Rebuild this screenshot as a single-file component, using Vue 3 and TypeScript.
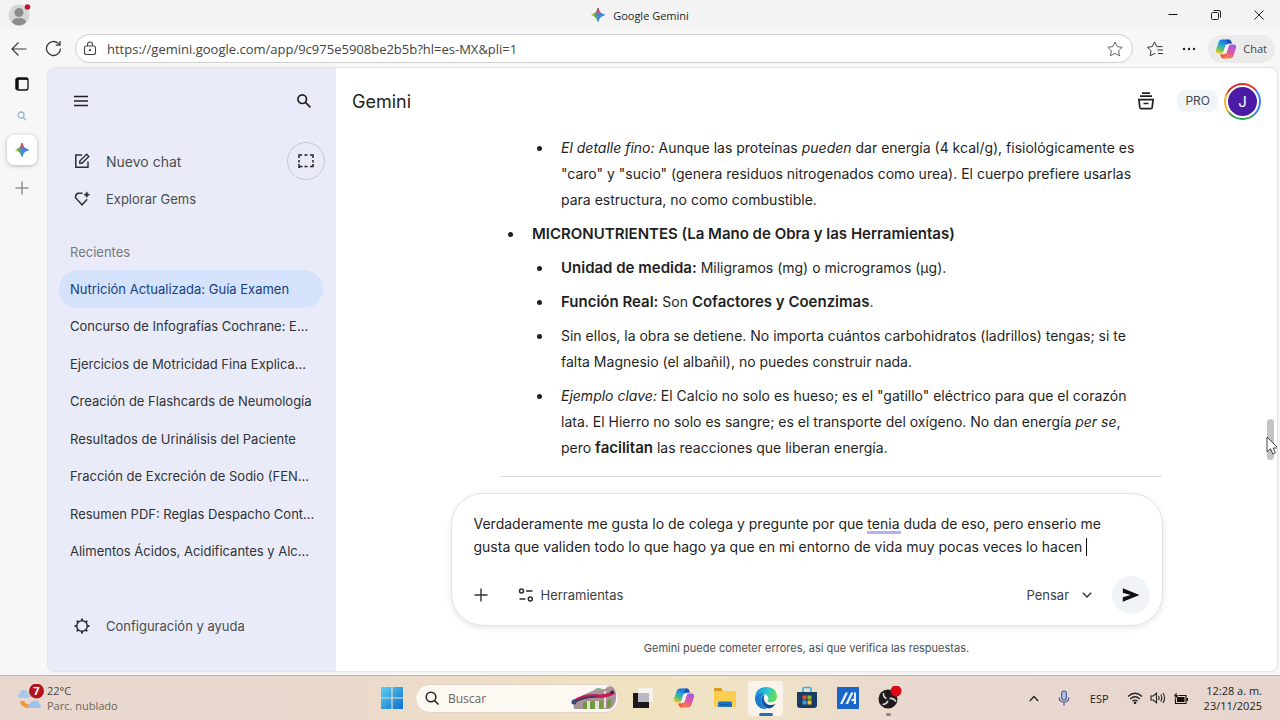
<script setup lang="ts">
import { ref } from 'vue'

interface Chat {
  title: string
  active?: boolean
}

const chats: Chat[] = [
  { title: 'Nutrición Actualizada: Guía Examen', active: true },
  { title: 'Concurso de Infografías Cochrane: E...' },
  { title: 'Ejercicios de Motricidad Fina Explica...' },
  { title: 'Creación de Flashcards de Neumología' },
  { title: 'Resultados de Urinálisis del Paciente' },
  { title: 'Fracción de Excreción de Sodio (FEN...' },
  { title: 'Resumen PDF: Reglas Despacho Cont...' },
  { title: 'Alimentos Ácidos, Acidificantes y Alc...' },
]

const url = ref('https://gemini.google.com/app/9c975e5908be2b5b?hl=es-MX&pli=1')
const mode = ref('Pensar')
const query = ref('')
const prompt = ref(
  'Verdaderamente me gusta lo de colega y pregunte por que tenia duda de eso, pero enserio me\n' +
    'gusta que validen todo lo que hago ya que en mi entorno de vida muy pocas veces lo hacen ',
)
</script>

<template>
  <div class="screen">
    <svg class="defs" width="0" height="0" aria-hidden="true">
      <defs>
        <linearGradient id="cpA" x1="0.6" y1="0" x2="0.2" y2="1">
          <stop offset="0" stop-color="#1b63d6" /><stop offset="0.4" stop-color="#22a5dc" />
          <stop offset="0.7" stop-color="#5cc06a" /><stop offset="1" stop-color="#f5cf2b" />
        </linearGradient>
        <linearGradient id="cpB" x1="0.7" y1="0" x2="0.3" y2="1">
          <stop offset="0" stop-color="#a05be8" /><stop offset="0.5" stop-color="#e0559f" />
          <stop offset="1" stop-color="#fb8a3c" />
        </linearGradient>
        <symbol id="copilot" viewBox="0 0 22 22">
          <path d="M7 1.500h6.500q2 0 2.600 2l.7 2H13q-2 0-2.600 2L8.600 13.500q-.6 2-2.600 2H3.500Q.3 15.500 1 12L3.500 4.500Q4.400 1.500 7 1.500z" fill="url(#cpA)" />
          <path d="M12.500 1.500h1q2 0 2.600 2l.7 2h-3.300q-1.800 0-2.500 1.500z" fill="#1d4fb5" />
          <path d="M15 20.500H8.500q-2 0-2.600-2l-.7-2H9q2 0 2.600-2l1.800-6q.6-2 2.600-2h2.500q3.200 0 2.500 3.500L18.500 17.500Q17.600 20.500 15 20.500z" fill="url(#cpB)" />
          <path d="M9.500 20.500h-1q-2 0-2.600-2l-.7-2h3.300q1.800 0 2.500-1.500z" fill="#f0623e" />
          <path d="M10.800 7h3.400L11.400 15H7.900z" fill="#f6f1ee" />
        </symbol>
        <linearGradient id="gmA" x1="0" y1="0.5" x2="1" y2="0.5">
          <stop offset="0" stop-color="#f6c61c" /><stop offset="0.32" stop-color="#3fae6a" />
          <stop offset="0.55" stop-color="#4a83e0" /><stop offset="1" stop-color="#2f86f6" />
        </linearGradient>
        <linearGradient id="gmB" x1="0.5" y1="0" x2="0.5" y2="1">
          <stop offset="0" stop-color="#ea3b35" /><stop offset="0.3" stop-color="#d8506a" stop-opacity="0.7" />
          <stop offset="0.45" stop-color="#4a83e0" stop-opacity="0" />
        </linearGradient>
        <symbol id="gemini" viewBox="0 0 16 16">
          <path d="M8 0.500Q9 7 15.500 8Q9 9 8 15.500Q7 9 .5 8Q7 7 8 .5z" fill="url(#gmA)" stroke="url(#gmA)" stroke-width="1.400" />
          <path d="M8 0.500Q9 7 15.500 8Q9 9 8 15.500Q7 9 .5 8Q7 7 8 .5z" fill="url(#gmB)" stroke="url(#gmB)" stroke-width="1.400" />
        </symbol>
      </defs>
    </svg>

    <header class="titlebar">
      <button class="profile" aria-label="Perfil">
        <svg width="24" height="24" viewBox="0 0 24 24">
          <circle cx="11" cy="12" r="10.500" fill="#d6d6d6" />
          <circle cx="11" cy="9.500" r="4.500" fill="#8c8c8c" />
          <path d="M4 19.500q0-4.500 7-4.500t7 4.500q-3 3-7 3t-7-3z" fill="#8c8c8c" />
          <circle cx="19.500" cy="4" r="2.800" fill="#c4122f" />
        </svg>
      </button>
      <div class="wintitle">
        <svg width="14" height="14"><use href="#gemini" /></svg>
        <span>Google Gemini</span>
      </div>
      <div class="winbtns">
        <button aria-label="Minimizar"><svg width="12" height="12" viewBox="0 0 12 12"><path d="M1.500 5.500h9" stroke="#111" /></svg></button>
        <button aria-label="Restaurar">
          <svg width="12" height="12" viewBox="0 0 12 12" fill="none" stroke="#222"><rect x="1.500" y="3.500" width="7" height="7" rx="1" /><path d="M3.500 1.500h5.500q1.500 0 1.500 1.500v5.500" /></svg>
        </button>
        <button aria-label="Cerrar"><svg width="12" height="12" viewBox="0 0 12 12"><path d="M1.500 1.500l9 9M10.500 1.500l-9 9" stroke="#222" /></svg></button>
      </div>
    </header>

    <nav class="toolbar" aria-label="Navegación">
      <button class="tool" aria-label="Atrás">
        <svg width="16" height="16" viewBox="0 0 16 16" fill="none" stroke="#3a3a3a" stroke-width="1.200"><path d="M15.500 8H1M7.500 1.500L1 8l6.500 6.500" /></svg>
      </button>
      <button class="tool" aria-label="Actualizar">
        <svg width="17" height="17" viewBox="0 0 17 17" fill="none" stroke="#3a3a3a" stroke-width="1.300"><path d="M15.500 8.500a7 7 0 1 1-2.200-5.100L15 5M15 1v4.200h-4.200" /></svg>
      </button>
      <div class="address">
        <svg width="14" height="15" viewBox="0 0 14 15" fill="none" stroke="#444" stroke-width="1.100"><rect x="1.500" y="5" width="11" height="8.500" rx="2" /><path d="M4.500 5V3.500a2.500 2.500 0 0 1 5 0V5" /><circle cx="7" cy="9.200" r=".6" fill="#444" /></svg>
        <input v-model="url" aria-label="Dirección" spellcheck="false" />
        <svg width="16" height="16" viewBox="0 0 16 16" fill="none" stroke="#666" stroke-linejoin="round"><path d="M8 1l2.200 4.600 5 .7-3.600 3.500.9 5L8 12.400l-4.500 2.400.9-5L.8 6.300l5-.7z" /></svg>
      </div>
      <button class="tool fav" aria-label="Favoritos">
        <svg width="17" height="16" viewBox="0 0 17 16" fill="none" stroke="#333" stroke-linejoin="round"><path d="M9.500 5.600H15.500M10.500 9h5.500M11 12.500h5M9.600 5.300L7.500 1 5.300 5.600l-4.800.7L4 9.800l-.8 5L7.500 12.500l1 .5" /></svg>
      </button>
      <button class="tool dots" aria-label="Más">
        <svg width="14" height="4" viewBox="0 0 14 4" fill="#222"><circle cx="2" cy="2" r="1.200" /><circle cx="7" cy="2" r="1.200" /><circle cx="12" cy="2" r="1.200" /></svg>
      </button>
      <button class="copilot">
        <svg width="22" height="22"><use href="#copilot" /></svg>
        <span>Chat</span>
      </button>
    </nav>

    <div class="body">
      <aside class="rail">
        <button aria-label="Pestañas verticales">
          <svg width="14" height="14" viewBox="0 0 14 14" fill="none"><rect x="1" y="1" width="12" height="12" rx="2" stroke="#111" stroke-width="1.300" /><path d="M2.200 1.500v11" stroke="#111" stroke-width="3" /><path d="M1 2h12" stroke="#111" stroke-width="1.800" /></svg>
        </button>
        <button aria-label="Buscar">
          <svg width="10" height="10" viewBox="0 0 10 10" fill="none" stroke="#8fb9c9" stroke-width="1.300"><circle cx="4" cy="4" r="3" /><path d="M6.200 6.200l3 3" /></svg>
        </button>
        <button class="tab" aria-label="Google Gemini"><svg width="14" height="14"><use href="#gemini" /></svg></button>
        <button aria-label="Nueva pestaña">
          <svg width="14" height="14" viewBox="0 0 14 14"><path d="M.5 7h13M7 .5v13" stroke="#666" /></svg>
        </button>
      </aside>

      <div class="page">
        <aside class="sidebar">
          <div class="sidehead">
            <button aria-label="Menú"><svg width="16" height="12" viewBox="0 0 16 12"><path d="M1 1.500h14M1 6h14M1 10.500h14" stroke="#1f1f1f" stroke-width="1.500" /></svg></button>
            <button aria-label="Buscar chats"><svg width="16" height="16" viewBox="0 0 16 16" fill="none" stroke="#1f1f1f" stroke-width="1.700"><circle cx="6.200" cy="6.200" r="4.300" /><path d="M9.400 9.400l5 5" /></svg></button>
          </div>
          <div class="newrow">
            <button class="action new">
              <svg width="16" height="16" viewBox="0 0 16 16" fill="none" stroke="#303236" stroke-width="1.500"><path d="M8 2H1.800v12.200H14V8.500" /><path d="M5.800 10.200V8L12.600 1.300 14.800 3.400 8 10.200z" stroke-width="1.400" /></svg>
              <span>Nuevo chat</span>
            </button>
            <button class="snap" aria-label="Chat temporal">
              <svg width="16" height="14" viewBox="0 0 16 14" fill="none" stroke="#222" stroke-width="1.500"><path d="M1 4V1h3M6.500 1h3M12 1h3v3M15 6v2.500M15 10v2.500h-3M9.500 12.500h-3M4.500 12.500H2.500L1 13.500V10M1 8.500V6" /></svg>
            </button>
          </div>
          <button class="action">
            <svg width="16" height="16" viewBox="0 0 16 16" fill="none" stroke="#303236" stroke-width="1.500"><path d="M8.500 2.300H4Q1.200 3.500 1.500 6.800L8 13.800l5.200-5.600" /><path d="M12.800.8q.3 2.500 2.800 2.900-2.500.4-2.800 2.900-.4-2.500-2.900-2.900Q12.400 3.300 12.800.8z" fill="#303236" stroke-width=".6" /></svg>
            <span>Explorar Gems</span>
          </button>
          <h2>Recientes</h2>
          <ul class="chats">
            <li v-for="c in chats" :key="c.title"><a href="#" :class="{ active: c.active }">{{ c.title }}</a></li>
          </ul>
          <button class="action settings">
            <svg width="16" height="16" viewBox="0 0 16 16" fill="none" stroke="#2b2d31" stroke-width="1.500"><circle cx="8" cy="8" r="5.300" /><path d="M8 .6v2M8 13.400v2M.6 8h2M13.400 8h2M2.800 2.800l1.300 1.300M11.900 11.900l1.300 1.300M13.200 2.800l-1.300 1.300M4.100 11.900l-1.300 1.300" stroke-width="2" /></svg>
            <span>Configuración y ayuda</span>
          </button>
        </aside>

        <main class="main">
          <header class="mainhead">
            <h1>Gemini</h1>
            <button class="box" aria-label="Archivo">
              <svg width="18" height="18" viewBox="0 0 18 18" fill="none" stroke="#1f1f1f" stroke-width="1.700"><path d="M5 1.200h8M3 4.200h12M1 7.600h16" /><path d="M2 8l.8 7.400q.2 1.300 1.500 1.300h9.400q1.300 0 1.500-1.300L16 8M6.500 11.500h5" /></svg>
            </button>
            <span class="pro">PRO</span>
            <button class="avatar" aria-label="Cuenta"><span>J</span></button>
          </header>

          <section class="chat">
            <ul class="outer">
              <li class="cont">
                <ul>
                  <li><em>El detalle fino:</em> Aunque las proteínas <em>pueden</em> dar energía (4 kcal/g), fisiológicamente es<br />"caro" y "sucio" (genera residuos nitrogenados como urea). El cuerpo prefiere usarlas<br />para estructura, no como combustible.</li>
                </ul>
              </li>
              <li>
                <b>MICRONUTRIENTES (La Mano de Obra y las Herramientas)</b>
                <ul>
                  <li><b>Unidad de medida:</b> Miligramos (mg) o microgramos (µg).</li>
                  <li><b>Función Real:</b> Son <b>Cofactores y Coenzimas</b>.</li>
                  <li>Sin ellos, la obra se detiene. No importa cuántos carbohidratos (ladrillos) tengas; si te<br />falta Magnesio (el albañil), no puedes construir nada.</li>
                  <li><em>Ejemplo clave:</em> El Calcio no solo es hueso; es el "gatillo" eléctrico para que el corazón<br />lata. El Hierro no solo es sangre; es el transporte del oxígeno. No dan energía <em>per se</em>,<br />pero <b>facilitan</b> las reacciones que liberan energía.</li>
                </ul>
              </li>
            </ul>
            <hr />
          </section>

          <form class="composer" @submit.prevent>
            <div class="field">
              <textarea v-model="prompt" rows="2" aria-label="Escribe una instrucción" spellcheck="false"></textarea>
              <i class="spell"></i>
              <i class="caret"></i>
            </div>
            <div class="controls">
              <button type="button" class="plus" aria-label="Agregar"><svg width="14" height="14" viewBox="0 0 14 14"><path d="M.5 7h13M7 .5v13" stroke="#333" stroke-width="1.400" /></svg></button>
              <button type="button" class="tools">
                <svg width="16" height="14" viewBox="0 0 16 14" fill="none" stroke="#2b2b2b" stroke-width="1.500"><circle cx="3.500" cy="3" r="2" /><path d="M8 3h6.500M1.500 11h6" /><circle cx="12.300" cy="11" r="2" /></svg>
                <span>Herramientas</span>
              </button>
              <div class="mode">
                <select v-model="mode" aria-label="Modelo"><option>Pensar</option></select>
                <svg width="10" height="6" viewBox="0 0 10 6"><path d="M.8.8L5 5 9.200.8" fill="none" stroke="#333" stroke-width="1.400" /></svg>
              </div>
              <button class="send" aria-label="Enviar"><svg width="18" height="14" viewBox="0 0 18 14"><path d="M.8.3L17.500 7 .8 13.700V9.300L8.500 7 .8 4.700z" fill="#111" /></svg></button>
            </div>
          </form>
          <p class="note">Gemini puede cometer errores, así que verifica las respuestas.</p>
          <i class="thumb"></i>
          <svg class="cursor" width="13" height="20" viewBox="0 0 13 20"><path d="M1 1v15l3.500-3.300L6.800 18l2.600-1.100L7.200 12H12z" fill="#fff" stroke="#444" /></svg>
        </main>
      </div>
    </div>

    <footer class="taskbar">
      <button class="weather">
        <svg width="29" height="28" viewBox="0 0 29 28">
          <path d="M1 14q-2-3 1-5 1-4 4.500-3 3 .5 3.500 4 3 1 1.500 4z" fill="#a9c8ef" />
          <path d="M2 17q1 7 8 7 4 0 6-3 -9 0-10-4z" fill="#f0993a" />
          <path d="M11 24q-2-3 1-4.500 2-3.500 6-2.500 3 0 3.500 3 2.500 2 .5 4z" fill="#9cc3f2" />
          <circle cx="18.500" cy="7" r="7.500" fill="#b3131f" />
          <text x="18.500" y="11" text-anchor="middle" class="badge">7</text>
        </svg>
        <span class="wtext"><span>22°C</span><span class="wsub">Parc. nublado</span></span>
      </button>
      <div class="dock">
        <button aria-label="Inicio">
          <svg width="22" height="22" viewBox="0 0 22 22"><defs><linearGradient id="win" x2="1" y2="1"><stop stop-color="#5fd0f5" /><stop offset="1" stop-color="#0a6fc9" /></linearGradient></defs><path d="M0 0h10.400v10.400H0zM11.600 0H22v10.400H11.600zM0 11.600h10.400V22H0zM11.600 11.600H22V22H11.600z" fill="url(#win)" /></svg>
        </button>
        <label class="search">
          <svg width="14" height="14" viewBox="0 0 14 14" fill="none" stroke="#222" stroke-width="1.500"><circle cx="6" cy="6" r="4.800" /><path d="M9.500 9.500l4 4" /></svg>
          <input v-model="query" placeholder="Buscar" aria-label="Buscar" />
          <svg class="art" width="46" height="26" viewBox="0 0 46 26">
            <path d="M20 9q6-10 12-4l-2 8z" fill="#8cb890" />
            <path d="M3 24q-2-8 3-10Q20 4 34 4q3-4 8-2 4 5 3 12-1 7-6 10z" fill="#a9929a" />
            <path d="M12 24v-6q4-3 4 0v6zM19 24v-7q4-3 5 0v7zM28 24v-7q4-3 4 0v7zM36 23v-7q4-3 4 0v5z" fill="#6f9b3e" />
            <path d="M16 24v-8h3v8zM24 24v-8h4v8zM33 23V6h2v17z" fill="#e9ded3" />
            <path d="M2 17Q14 10 25 11t18-4" fill="none" stroke="#bf1f55" stroke-width="3.500" />
            <path d="M1 18Q14 11 25 12" fill="none" stroke="#3c3a66" stroke-width="1.500" />
            <circle cx="3" cy="17" r="2.500" fill="#3b4a77" /><circle cx="41" cy="7" r="1.500" fill="#222" />
          </svg>
        </label>
        <button aria-label="Vista de tareas"><svg width="22" height="22" viewBox="0 0 22 22"><path d="M1 6h16v15H1z" fill="#1b1b1b" /><path d="M6 1h15v14H6z" fill="#f7f5f5" fill-opacity=".85" /><path d="M6 6h11v9H6z" fill="#bdb9c2" /></svg></button>
        <button aria-label="Copilot"><svg width="22" height="22"><use href="#copilot" /></svg></button>
        <button aria-label="Explorador"><svg width="24" height="22" viewBox="0 0 24 22"><path d="M1 2q0-1 1-1h6l2 3H1z" fill="#d99a1e" /><path d="M1 4h21q1 0 1 1v14q0 1-1 1H2q-1 0-1-1z" fill="#fbcd4e" /><path d="M5 20v-4q0-1.500 1.500-1.500h11q1.500 0 1.500 1.500v4z" fill="#1b74bf" /><path d="M7 17.500h10" stroke="#1257a0" /></svg></button>
        <button class="current" aria-label="Edge">
          <svg width="24" height="24" viewBox="0 0 24 24"><defs><linearGradient id="eA" x2="1" y2=".3"><stop stop-color="#1684d3" /><stop offset=".55" stop-color="#2cc4d8" /><stop offset="1" stop-color="#62dc55" /></linearGradient><linearGradient id="eB" x2=".6" y2="1"><stop stop-color="#1b6fc6" /><stop offset="1" stop-color="#0c4a94" /></linearGradient></defs>
            <path d="M1 11Q2 1 12.500 1 22.500 1.500 23 10q0 6-6 6.300-4 .2-3.300-1.800Q15.500 12 13 9.500 8 5.500 1 11z" fill="url(#eA)" />
            <path d="M1 11q4-5 9.500-3.500Q7 9.500 7 14q.5 6.500 6 8.800Q3 24 1 14z" fill="#1a7fd0" />
            <path d="M10.500 8Q7 10 7 14q1 8 8.500 8.500 4-1 6-4.500-4.500 2-8 .2Q8.500 15 10.500 8z" fill="url(#eB)" />
          </svg>
        </button>
        <button aria-label="Microsoft Store"><svg width="22" height="24" viewBox="0 0 22 24"><path d="M7 6V3q0-1.500 1.500-1.500h5Q15 1.500 15 3v3" fill="none" stroke="#35b1e0" stroke-width="1.700" /><path d="M1 6h20v13q0 3-3 3H4q-3 0-3-3z" fill="#183c63" /><path d="M6.500 9.500h4v4h-4z" fill="#e9512d" /><path d="M11.500 9.500h4v4h-4z" fill="#7fba2a" /><path d="M6.500 14.500h4v4h-4z" fill="#2ca3e8" /><path d="M11.500 14.500h4v4h-4z" fill="#fdbb1e" /></svg></button>
        <button aria-label="Aplicación"><svg width="22" height="22" viewBox="0 0 22 22"><path d="M0 0h22v22H0z" fill="#1b66c9" /><path d="M3 17L8.500 5.500h2.500L5.500 17zM8.500 17L14 5.500h2.500L11 17zM17 5.500h2V17h-2.200v-3H14l1-2.200h1.800z" fill="#e8f3fd" /></svg></button>
        <button class="running" aria-label="OBS">
          <svg width="26" height="24" viewBox="0 0 26 24"><circle cx="12" cy="13" r="9.500" fill="#1c1a1c" /><path d="M12 13q-5-1-4.500-6M12 13q5-2 8 2.500M12 13q0 5-5.500 5.500" fill="none" stroke="#d8d4d4" stroke-width="1.500" /><circle cx="12" cy="13" r="1.800" fill="#1c1a1c" /><circle cx="20" cy="5" r="5.500" fill="#dc0814" /></svg>
        </button>
      </div>
      <div class="tray">
        <button aria-label="Iconos ocultos"><svg width="10" height="7" viewBox="0 0 10 7"><path d="M.8 6L5 1.500 9.200 6" fill="none" stroke="#222" stroke-width="1.300" /></svg></button>
        <button class="mic" aria-label="Micrófono"><svg width="12" height="16" viewBox="0 0 12 16" fill="none" stroke="#3f5ba5" stroke-width="1.200"><rect x="3.700" y="1" width="4.600" height="9" rx="2.300" fill="#b9c4e6" /><path d="M1.200 7.500q0 4.500 4.800 4.500t4.800-4.500M6 12v3.500" /></svg></button>
        <span class="lang">ESP</span>
        <button class="status" aria-label="Red, sonido y batería">
          <svg width="16" height="12" viewBox="0 0 16 12" fill="none" stroke="#222" stroke-width="1.200"><path d="M1 4.500q7-6.500 14 0M3.200 7q4.800-4.500 9.600 0M5.400 9.300q2.600-2.300 5.200 0" /><circle cx="8" cy="10.800" r=".7" fill="#222" /></svg>
          <svg width="16" height="12" viewBox="0 0 16 12" fill="none" stroke="#222" stroke-width="1.100"><path d="M1 4h2.200L6.500 1.200v9.600L3.200 8H1zM8.500 4q1.200 2 0 4M10.700 2.500q2.200 3.500 0 7M12.900 1q3.400 5 0 10" /></svg>
          <svg width="16" height="13" viewBox="0 0 16 13"><path d="M2.500 3.500h10.500v8H2.500z" fill="none" stroke="#111" stroke-width="1.100" /><path d="M4 5h7.500v5H4z" fill="#111" /><path d="M13.500 6h1.500v3h-1.500z" fill="#111" /><path d="M3.500 0L.5 4.500h2L1.500 8l4.500-5H3.800z" fill="#111" stroke="#e9d7ce" stroke-width=".4" /></svg>
        </button>
        <div class="clock"><span>12:28 a. m.</span><span>23/11/2025</span></div>
      </div>
    </footer>
  </div>
</template>

<style>
html,
body {
  margin: 0;
  background: #f7f7f7;
}
</style>

<style scoped>
* {
  box-sizing: border-box;
}
.screen {
  display: flex;
  flex-direction: column;
  height: 100vh;
  overflow: hidden;
  background: #f7f7f7;
  color: #1f1f1f;
  font-family: Inter, Roboto, sans-serif;
  font-size: 13px;
}
.defs {
  position: absolute;
}
svg {
  display: block;
  flex: none;
}
button {
  display: flex;
  align-items: center;
  justify-content: center;
  border: 0;
  padding: 0;
  background: none;
  color: inherit;
  font: inherit;
}
input,
textarea,
select {
  border: 0;
  padding: 0;
  outline: 0;
  background: none;
  color: inherit;
  font: inherit;
}
ul,
h1,
h2,
p {
  margin: 0;
  padding: 0;
}

.titlebar {
  display: grid;
  grid-template-columns: 1fr auto 1fr;
  align-items: center;
  height: 30px;
  background: #f3f3f3;
  font-family: 'Open Sans', 'Noto Sans', sans-serif;
  font-size: 11px;
}
.profile {
  justify-self: start;
  margin-left: 8px;
}
.wintitle {
  display: flex;
  align-items: center;
  gap: 8px;
}
.winbtns {
  display: flex;
  justify-content: flex-end;
}
.winbtns button {
  width: 43px;
  height: 30px;
}
.toolbar {
  display: flex;
  align-items: center;
  height: 37px;
  padding: 0 5px 0 1px;
}
.tool {
  width: 35px;
  height: 30px;
}
.tool.fav {
  margin-left: 5px;
}
.tool.dots {
  width: 32px;
}
.address {
  display: flex;
  flex: 1;
  align-items: center;
  gap: 10px;
  height: 29px;
  margin-left: 4px;
  padding: 0 9px 0 7px;
  border: 1px solid #d0d0d0;
  border-radius: 15px;
  background: #fff;
}
.address input {
  flex: 1;
  min-width: 0;
  color: #444;
  font: 13px 'Open Sans', 'Noto Sans', sans-serif;
}
.copilot {
  gap: 6px;
  height: 28px;
  margin-left: 3px;
  padding: 0 8px 0 7px;
  border-radius: 14px;
  background: #ebebeb;
  color: #444;
  font: 11px 'Open Sans', 'Noto Sans', sans-serif;
}

.body {
  display: flex;
  flex: 1;
  min-height: 0;
  padding: 1px 3px 4px 0;
}
.rail {
  display: flex;
  flex: none;
  flex-direction: column;
  align-items: center;
  width: 44px;
  margin-right: 4px;
}
.rail button {
  width: 30px;
  height: 32px;
}
.rail .tab {
  height: 30px;
  margin: 3px 0 7px;
  border-radius: 7px;
  background: #fff;
  box-shadow: 0 1px 4px #0004;
}
.page {
  display: flex;
  flex: 1;
  min-width: 0;
  overflow: hidden;
  border-radius: 7px;
  background: #fff;
  box-shadow: 0 0 2px #0004;
}
.sidebar {
  display: flex;
  flex: none;
  flex-direction: column;
  width: 288px;
  padding: 0 13px 26px 11px;
  background: #e9ecf8;
}
.sidehead {
  display: flex;
  align-items: center;
  justify-content: space-between;
  height: 66px;
  margin-bottom: 8px;
  padding: 0 11px 0 14px;
}
.newrow {
  display: flex;
  justify-content: space-between;
  margin-right: -2px;
}
.action {
  justify-content: flex-start;
  gap: 16px;
  height: 38px;
  padding-left: 15px;
  color: #4a4c50;
}
.new {
  font-size: 14px;
}
.snap {
  width: 38px;
  height: 38px;
  border: 1px solid #c6c8d2;
  border-radius: 50%;
}
h2 {
  margin: 22px 0 6px 11px;
  color: #75777c;
  font-size: 13px;
  font-weight: 400;
  line-height: 24px;
}
.chats {
  display: grid;
  grid-auto-rows: 1fr;
  min-height: 300px;
  list-style: none;
}
.chats a {
  display: flex;
  align-items: center;
  height: 100%;
  padding-left: 11px;
  border-radius: 19px;
  color: #303236;
  font-size: 13px;
  text-decoration: none;
  white-space: nowrap;
}
.chats .active {
  background: #d4e2fc;
  color: #173f7d;
}
.settings {
  margin-top: auto;
}

.main {
  position: relative;
  display: flex;
  flex: 1;
  flex-direction: column;
  min-width: 0;
}
.mainhead {
  display: flex;
  align-items: center;
  flex: none;
  height: 66px;
  padding: 0 16px;
}
h1 {
  margin-right: auto;
  font-size: 18px;
  font-weight: 400;
}
.pro {
  margin: 0 6px 0 22px;
  padding: 0 8px;
  border-radius: 8px;
  background: #f1f5f8;
  color: #44474c;
  font-size: 12px;
  line-height: 22px;
}
.avatar {
  width: 37px;
  height: 37px;
  border-radius: 50%;
  background: conic-gradient(#e2382b 0 12%, #3f7fe8 14% 38%, #2ba24c 42% 62%, #f3b52b 66% 80%, #d3302b 86%);
}
.avatar span {
  width: 33px;
  height: 33px;
  border: 2px solid #fff;
  border-radius: 50%;
  background: #4c1ba6;
  color: #fff;
  font-size: 15px;
  line-height: 29px;
}
.chat {
  flex: 1;
  width: 100%;
  max-width: 711px;
  min-height: 0;
  margin: 0 auto;
  padding: 1px 0 0 50px;
  overflow: hidden;
  font-size: 14px;
  line-height: 26px;
}
.outer {
  padding-left: 23px;
}
.chat li {
  margin-bottom: 8px;
  padding-left: 8px;
  white-space: nowrap;
}
.chat li ul {
  padding-left: 21px;
}
.chat li ul li:first-child {
  margin-top: 8px;
}
.chat .cont {
  list-style: none;
}
.chat .cont li:first-child {
  margin-top: 0;
}
.chat ul ul {
  list-style: disc;
}
.chat li:last-child {
  margin-bottom: 0;
}
b {
  font-size: 15px;
  font-weight: 600;
  line-height: 20px;
}
hr {
  height: 1px;
  margin: 15px 0 0;
  border: 0;
  background: #dcdcdc;
}
.composer {
  flex: none;
  width: 100%;
  max-width: 712px;
  margin: 0 auto;
  padding: 18px 12px 11px 22px;
  border: 1px solid #e2e2e2;
  border-radius: 32px;
  box-shadow: 0 2px 6px #0000001a;
}
.field {
  position: relative;
}
textarea {
  display: block;
  width: 100%;
  overflow: hidden;
  resize: none;
  font-size: 14px;
  line-height: 23px;
}
.spell {
  position: absolute;
  left: 393px;
  top: 19px;
  width: 34px;
  height: 3px;
  background: #b9aef0;
}
.caret {
  position: absolute;
  left: 612px;
  top: 26px;
  width: 1px;
  height: 18px;
  background: #111;
}
.controls {
  display: flex;
  align-items: center;
  margin-top: 18px;
  color: #3c3e42;
}
.tools {
  gap: 7px;
  margin: 0 auto 0 30px;
}
.mode {
  display: grid;
  align-items: center;
  width: 65px;
  margin-right: 20px;
}
.mode > * {
  grid-area: 1 / 1;
}
.mode select {
  appearance: none;
}
.mode svg {
  justify-self: end;
  pointer-events: none;
}
.send {
  width: 38px;
  height: 38px;
  border-radius: 50%;
  background: #f0f3f8;
}
.note {
  padding: 14px 0 15px;
  color: #4c4e52;
  font-size: 11px;
  line-height: 16px;
  text-align: center;
}
.thumb {
  position: absolute;
  right: 3px;
  top: 351px;
  width: 7px;
  height: 41px;
  border-radius: 4px;
  background: #c4c4c4;
}
.cursor {
  position: absolute;
  right: -2px;
  top: 368px;
}

.taskbar {
  display: grid;
  grid-template-columns: 1fr auto 1fr;
  align-items: center;
  flex: none;
  height: 45px;
  padding: 0 18px;
  border-top: 1px solid #b9b2b0;
  background: linear-gradient(90deg, #e9d8ce 0, #ead9cd 25%, #f0e2bf 50%, #efe1c8 60%, #e9d8cf 72%, #e7d6cd 100%);
  font-family: 'Open Sans', 'Noto Sans', sans-serif;
  font-size: 11px;
}
.weather {
  justify-self: start;
  color: #4a403c;
}
.wtext {
  display: grid;
  line-height: 15px;
  text-align: left;
}
.badge {
  fill: #fff;
  font: 700 11px 'Open Sans', sans-serif;
}
.wsub {
  color: #6f6560;
}
.dock {
  display: flex;
  align-items: center;
  gap: 6px;
}
.dock button {
  position: relative;
  width: 35px;
  height: 35px;
  border-radius: 4px;
}
.dock .current {
  background: #f9f3ea;
}
.current::after,
.running::after {
  content: '';
  position: absolute;
  bottom: 0;
  width: 14px;
  height: 3px;
  border-radius: 2px;
  background: #2a6db0;
}
.running::after {
  width: 5px;
  background: #8f827b;
}
.search {
  display: flex;
  align-items: center;
  width: 204px;
  height: 29px;
  padding: 0 1px 0 9px;
  border: 1px solid #e3d5c8;
  border-radius: 15px;
  background: #fdf8f2;
}
.search input {
  flex: 1;
  min-width: 0;
  margin-left: 9px;
  font: 12px 'Open Sans', 'Noto Sans', sans-serif;
}
.search input::placeholder {
  color: #6b6560;
  opacity: 1;
}
.tray {
  display: flex;
  align-items: center;
  justify-self: end;
}
.mic {
  margin: 0 20px 0 19px;
}
.lang {
  font-size: 11px;
}
.status {
  gap: 7px;
  margin: 0 15px 0 18px;
}
.clock {
  display: grid;
  line-height: 15px;
  text-align: right;
}
</style>
